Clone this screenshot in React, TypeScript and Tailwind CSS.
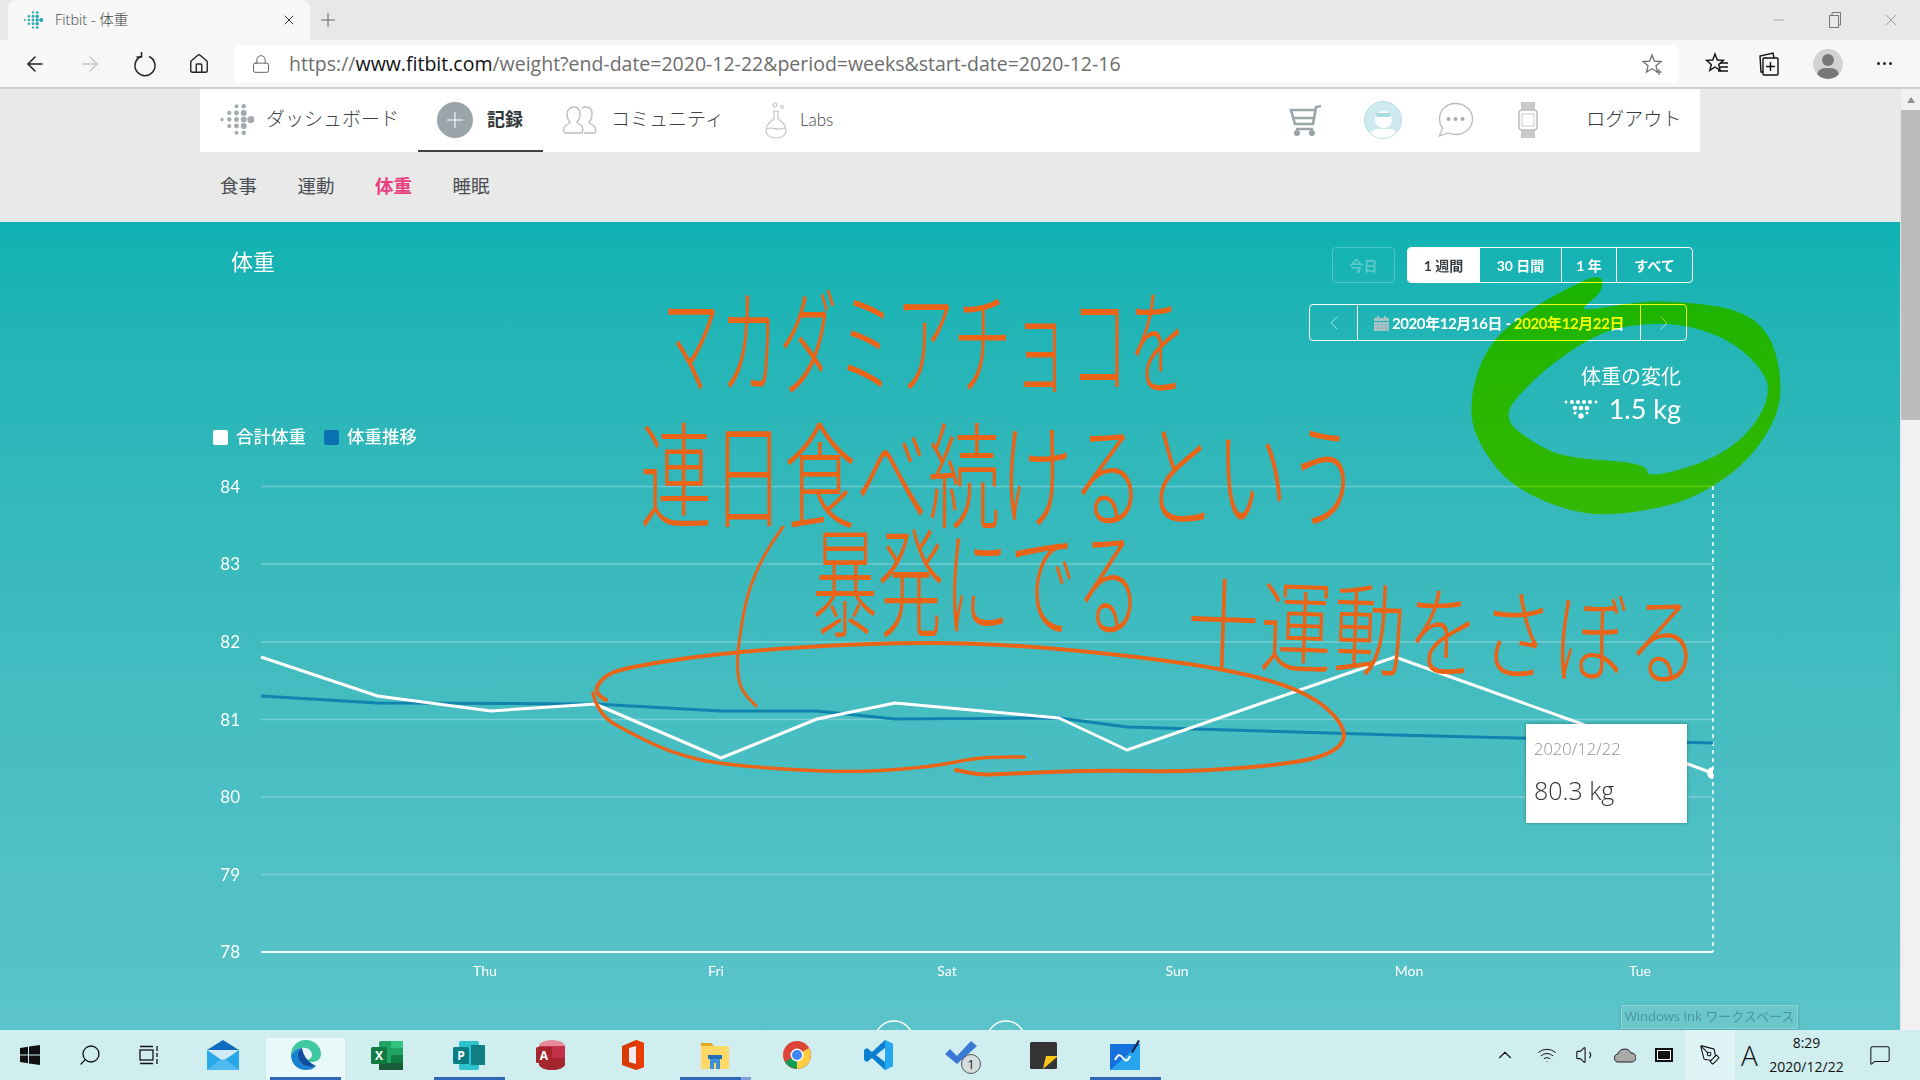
import React from "react";
import { ArrowLeft, ArrowRight, Home, Lock, X, Plus, Minus, ChevronLeft, ChevronRight, ChevronUp, Search, Volume1, Wifi, PenTool, MessageSquare } from "lucide-react";

const smooth = (pts: number[][], close = false) => {
  if (close) {
    const m0 = [(pts[pts.length - 1][0] + pts[0][0]) / 2, (pts[pts.length - 1][1] + pts[0][1]) / 2];
    let d = `M${m0[0]} ${m0[1]}`;
    pts.forEach((p, i) => {
      const n = pts[(i + 1) % pts.length];
      d += ` Q${p[0]} ${p[1]} ${(p[0] + n[0]) / 2} ${(p[1] + n[1]) / 2}`;
    });
    return d + " Z";
  }
  let d = `M${pts[0][0]} ${pts[0][1]}`;
  for (let i = 1; i < pts.length - 1; i++) {
    const p = pts[i], n = pts[i + 1];
    d += ` Q${p[0]} ${p[1]} ${(p[0] + n[0]) / 2} ${(p[1] + n[1]) / 2}`;
  }
  const l = pts[pts.length - 1];
  return d + ` L${l[0]} ${l[1]}`;
};

const FitbitLogo = ({ size, color }: { size: number; color: string }) => {
  const cols: [number, number, number][] = [[3, 0, 1.6], [10, 1, 2.1], [17, 2, 2.4], [24, 3, 2.2], [24, 1, 2.9], [31, 0, 3.5]];
  const dots: React.ReactNode[] = [];
  cols.forEach(([x, n, r], i) => {
    for (let k = -n; k <= n; k++) {
      const rr = Math.abs(k) === n && n > 1 ? r * 0.8 : r;
      dots.push(<circle key={`${i}${k}`} cx={x} cy={17 + k * 6.4} r={rr} fill={color} />);
    }
  });
  return <svg width={size} height={size} viewBox="0 0 34 34">{dots}</svg>;
};

const polyW = "261,657 377.5,696 491,711 595,704 721,758 817,719 895,703 1059,718 1127,750 1395,657 1582,724 1712,773";
const polyB = "261,696 377.5,703 595,704 721,711 817,711 895,719 1059,718 1127,727 1395,735 1713,743";
const ySteps: [string, number][] = [["84", 486.5], ["83", 564], ["82", 642], ["81", 719.5], ["80", 797], ["79", 874.5], ["78", 952]];
const xSteps: [string, number][] = [["Thu", 485], ["Fri", 716], ["Sat", 947], ["Sun", 1177], ["Mon", 1409], ["Tue", 1640]];

const greenOuter = [[1602,272],[1603,293],[1574,313],[1639,301],[1688,302],[1741,310],[1770,333],[1782,377],[1778,417],[1749,460],[1709,490],[1668,507],[1606,516],[1566,510],[1525,493],[1496,470],[1472,430],[1471,397],[1480,363],[1496,337],[1525,313],[1558,293]];
const greenInner = [[1502,418],[1525,387],[1566,353],[1606,330],[1647,323],[1688,325],[1729,340],[1757,363],[1772,390],[1753,430],[1713,460],[1647,479],[1647,463],[1566,458],[1533,443]];

const Segment = ({ children, active, w }: { children: React.ReactNode; active?: boolean; w: string }) => (
  <div className={`${w} h-full flex items-center justify-center text-[14px] font-bold ${active ? "bg-white text-[#3a3f44]" : "text-white border-l border-white"}`}>{children}</div>
);

const TaskItem = ({ children, active, under, under2 }: { children: React.ReactNode; active?: boolean; under?: boolean; under2?: boolean }) => (
  <div className="w-[82px] h-full relative flex items-center justify-center">
    {active && <div className="absolute left-[2px] right-[1px] top-[8px] bottom-0 bg-[#e9f8f8]" />}
    {under && <div className="absolute bottom-0 h-[3px] left-[6px] right-[5px] bg-[#2f66b5]" />}
    {under2 && <div className="absolute bottom-0 h-[3px] left-[67px] w-[10px] bg-[#7f9fd8]" />}
    <div className="relative">{children}</div>
  </div>
);

export default function App() {
  return (
    <div className="w-[1920px] h-[1080px] overflow-hidden flex flex-col font-['Lato','Noto_Sans_CJK_JP',sans-serif] bg-[#e9e9e9]">
      {/* tab strip */}
      <div className="h-[40px] bg-[#e8e8e8] flex items-end pl-[8px]">
        <div className="w-[302px] h-[40px] bg-[#f7f7f7] rounded-t-[8px] flex items-center pl-[15px] pr-[13px] font-['Open_Sans','Noto_Sans_CJK_JP',sans-serif]">
          <FitbitLogo size={20} color="#2aa8ad" />
          <span className="ml-[12px] text-[14.5px] text-[#444] font-light">Fitbit - 体重</span>
          <X className="ml-auto text-[#333]" size={16} strokeWidth={1.5} />
        </div>
        <div className="ml-[7px] h-[40px] flex items-center"><Plus size={22} strokeWidth={1} className="text-[#555]" /></div>
        <div className="ml-auto h-[40px] flex items-center text-[#888]">
          <Minus size={16} strokeWidth={1} />
          <svg className="ml-[40px]" width="16" height="18" viewBox="0 0 16 18" fill="none" stroke="#777"><rect x="2.5" y="4.5" width="9" height="12" /><path d="M5 4V1.500h8.500V14H12" /></svg>
          <X className="ml-[38px] mr-[19px]" size={20} strokeWidth={0.9} />
        </div>
      </div>
      {/* toolbar */}
      <div className="h-[49px] bg-[#f7f7f7] border-b-2 border-[#cfcfcf] flex items-center">
        <ArrowLeft className="ml-[23px] text-[#222]" size={24} strokeWidth={1.5} />
        <ArrowRight className="ml-[31px] text-[#c4c4c4]" size={24} strokeWidth={1.5} />
        <svg className="ml-[31px]" width="24" height="26" viewBox="0 0 24 26" fill="none" stroke="#222" strokeWidth="1.500"><path d="M8 5.500a10 10 0 1 0 8 0" /><path d="M8.500 1v5H3.500" /></svg>
        <Home className="ml-[31px] text-[#222]" size={22} strokeWidth={1.5} />
        <div className="ml-[24px] w-[1445px] h-[38px] bg-white rounded-[5px] flex items-center pl-[17px] font-['Open_Sans',sans-serif]">
          <Lock size={20} strokeWidth={1.2} className="text-[#666]" />
          <div className="ml-[18px] text-[19.5px] text-[#6d6d6d] whitespace-nowrap">
            https://<span className="text-[#111]">www.fitbit.com</span>/weight?end-date=2020-12-22&amp;period=weeks&amp;start-date=2020-12-16
          </div>
          <svg className="ml-auto mr-[15px]" width="22" height="24" viewBox="0 0 22 24" fill="none" stroke="#666" strokeWidth="1.2"><path d="M10 3l2.400 6.200 6.600.4-5.100 4.200 1.700 6.400L10 16.600 4.400 20.200l1.700-6.400L1 9.600l6.600-.4z" /><path d="M17 17v6M14 20h6" /></svg>
        </div>
        <svg className="ml-[26px]" width="24" height="26" viewBox="0 0 24 26" fill="none" stroke="#111" strokeWidth="1.4"><path d="M10 3l2.300 6 6.200.4-4.800 4 1.500 6L10 16l-5.200 3.400 1.500-6-4.800-4 6.200-.4z" /><path d="M15 12h8M15 16h8M13 20h10" /></svg>
        <svg className="ml-[29px]" width="24" height="28" viewBox="0 0 24 28" fill="none" stroke="#111" strokeWidth="1.4"><rect x="5" y="8" width="15" height="17" rx="1" /><path d="M5 22H3L2 6l13-3 1 5M12.500 12v9M8 16.500h9" /></svg>
        <div className="ml-[31px] w-[30px] h-[30px] rounded-full bg-[#d3d3d3] relative overflow-hidden">
          <div className="absolute left-[9px] top-[5px] w-[12px] h-[12px] rounded-full bg-[#777]" />
          <div className="absolute left-[4px] top-[19px] w-[22px] h-[16px] rounded-full bg-[#777]" />
        </div>
        <div className="ml-[34px] flex gap-[3px]">
          <div className="w-[3px] h-[3px] rounded-full bg-[#222]" /><div className="w-[3px] h-[3px] rounded-full bg-[#222]" /><div className="w-[3px] h-[3px] rounded-full bg-[#222]" />
        </div>
      </div>

      {/* page */}
      <div className="h-[941px] flex">
        <div className="w-[1900px] flex flex-col">
          <div className="ml-[200px] w-[1500px] h-[63px] bg-white flex items-center pb-[2px] text-[#3f4448] text-[19px] font-light relative">
            <div className="ml-[19px]"><FitbitLogo size={35} color="#a3abae" /></div>
            <span className="ml-[12px]">ダッシュボード</span>
            <div className="ml-[38px] w-[36px] h-[36px] rounded-full bg-[#9aa5a9] flex items-center justify-center"><Plus size={26} strokeWidth={1} className="text-white" /></div>
            <span className="ml-[14px] text-[18px] font-bold text-[#33383c]">記録</span>
            <svg className="ml-[39px]" width="36" height="32" viewBox="0 0 36 32" fill="none" stroke="#b9bdbf" strokeWidth="1.300"><path d="M12 3c4 0 6 3 6 7 0 3-1 6-3 8 0 2 3 2 5 4 1 2 1 6 0 7H3c-2-1-2-5 0-7s5-2 5-4c-2-2-3-5-3-8 0-4 3-7 7-7z" /><path d="M20 4c1-1 3-1 4-1 4 0 6 3 6 7 0 3-1 6-3 8 0 2 3 2 5 4 2 2 2 6 1 7H22" /></svg>
            <span className="ml-[13px]">コミュニティ</span>
            <svg className="ml-[40px]" width="24" height="38" viewBox="0 0 24 38" fill="none" stroke="#c3c6c8" strokeWidth="1.200"><path d="M9 10h6M10 10v8C6 21 2 24 2 29c0 5 4 8 10 8s10-3 10-8c0-5-4-8-8-11v-8" /><path d="M3 28c5-3 8 2 18-1" /><circle cx="11" cy="4" r="2" /><circle cx="18" cy="6" r="1.500" /></svg>
            <span className="ml-[12px] text-[17px]">Labs</span>
            <svg className="ml-[456px]" width="33" height="32" viewBox="0 0 33 32" fill="none" stroke="#9aa5a9" strokeWidth="2.600"><path d="M32 2l-5 1-3 17H6L2 6h24" /><path d="M5 14h20M7 25h17" /><circle cx="8" cy="29" r="1.800" fill="#9aa5a9" /><circle cx="23" cy="29" r="1.800" fill="#9aa5a9" /></svg>
            <div className="ml-[42px] w-[38px] h-[38px] rounded-full bg-[#cfeaee] border border-[#b8dfe5] relative overflow-hidden">
              <div className="absolute left-[10px] top-[9px] w-[17px] h-[17px] rounded-full bg-white" />
              <div className="absolute left-[11px] top-[11px] w-[15px] h-[4px] rounded-full bg-[#a9dbe2]" />
              <div className="absolute left-[3px] top-[27px] w-[31px] h-[20px] rounded-full bg-white" />
            </div>
            <svg className="ml-[35px]" width="37" height="36" viewBox="0 0 37 36" fill="none" stroke="#b9bdbf" strokeWidth="1.300"><path d="M18.500 1.500C28 1.500 35.500 8.500 35.500 17s-7.500 15.500-17 15.500c-2.500 0-5-.5-7-1.500l-9 3 3-8c-2-2.500-3-5.500-3-9C2.500 8.500 9 1.500 18.500 1.500z" /><circle cx="11.500" cy="17" r="2" fill="#a8adaf" stroke="none" /><circle cx="18.500" cy="17" r="2" fill="#a8adaf" stroke="none" /><circle cx="25.500" cy="17" r="2" fill="#a8adaf" stroke="none" /></svg>
            <svg className="ml-[43px]" width="22" height="36" viewBox="0 0 22 36" fill="none"><rect x="4" y="0" width="14" height="8" fill="#c9c9c9" /><rect x="4" y="28" width="14" height="8" fill="#c9c9c9" /><rect x="2" y="8" width="18" height="20" rx="3" stroke="#bbb" strokeWidth="1.500" /><rect x="5" y="12" width="12" height="12" stroke="#ccc" /></svg>
            <span className="ml-[47px] text-[#33383c]">ログアウト</span>
            <div className="absolute left-[218px] top-[61px] w-[125px] h-[2px] bg-[#3c4146]" />
          </div>
          <div className="ml-[220px] h-[70px] flex items-center gap-[40.5px] text-[18.5px] text-[#4a4f53] pb-[1px]">
            <span>食事</span><span>運動</span><span className="font-bold text-[#e8407f]">体重</span><span>睡眠</span>
          </div>

          {/* teal section */}
          <div className="relative flex-1 overflow-hidden isolate bg-linear-to-b from-[#0eb2b3] to-[#5ac4ca] text-white">
            <div className="w-[1700px] h-[250px] flex justify-between pl-[213px]">
              <div className="flex flex-col justify-between pb-[23px] pt-[26px]">
                <div className="ml-[18px] text-[22px] leading-[28px]">体重</div>
                <div className="flex items-center text-[17.5px] font-medium leading-[24px]">
                  <div className="w-[15px] h-[15px] rounded-[2px] bg-white" />
                  <span className="ml-[8px]">合計体重</span>
                  <div className="ml-[18px] w-[15px] h-[15px] rounded-[2px] bg-[#0a72b0]" />
                  <span className="ml-[8px]">体重推移</span>
                </div>
              </div>
              <div className="flex flex-col items-end pt-[25px] pr-[7px]">
                <div className="flex h-[36px]">
                  <div className="w-[63px] h-[36px] rounded-[4px] border border-white/25 flex items-center justify-center text-[14px] font-bold text-white/30">今日</div>
                  <div className="ml-[12px] flex h-[36px] rounded-[4px] border border-white overflow-hidden">
                    <Segment active w="w-[71px]">1 週間</Segment>
                    <Segment w="w-[82px]">30 日間</Segment>
                    <Segment w="w-[55px]">1 年</Segment>
                    <Segment w="w-[76px]">すべて</Segment>
                  </div>
                </div>
                <div className="mt-[21px] mr-[6px] flex h-[37px] w-[378px] rounded-[4px] border border-white">
                  <div className="w-[47px] flex items-center justify-center"><ChevronLeft size={24} strokeWidth={1} className="text-white/60" /></div>
                  <div className="w-[284px] border-x border-white flex items-center justify-center pt-[2px] text-[15px] font-bold tracking-[-0.4px] whitespace-nowrap">
                    <svg className="mr-[3px]" width="15" height="15" viewBox="0 0 15 15" fill="#a7c4c9"><path d="M3 0h2v2h5V0h2v2h3v3H0V2h3z" /><path d="M0 6h15v9H0z" /><path d="M0 9h15M0 12h15M4 6v9M8 6v9M12 6v9" stroke="#8fb3b8" strokeWidth=".6" /></svg>
                    2020年12月16日 - 2020年12月22日
                  </div>
                  <div className="flex-1 flex items-center justify-center"><ChevronRight size={24} strokeWidth={1} className="text-white/60" /></div>
                </div>
                <div className="mt-[22px] mr-[12px] flex flex-col items-end">
                  <div className="text-[20px] leading-[26px]">体重の変化</div>
                  <div className="mt-[2px] flex items-center">
                    <svg width="34" height="20" viewBox="0 0 34 20" fill="#fff">
                      {[2, 8, 14, 20, 26, 32].map((x) => <circle key={x} cx={x} cy="3" r={x === 2 || x === 32 ? 1.4 : 2} />)}
                      {[11, 17, 23].map((x) => <circle key={x} cx={x} cy="9" r="2.300" />)}
                      <circle cx="17" cy="17" r="2.700" /><circle cx="11" cy="14" r="1.500" /><circle cx="23" cy="14" r="1.500" />
                    </svg>
                    <span className="ml-[11px] text-[27px] leading-[36px]">1.5 kg</span>
                  </div>
                </div>
              </div>
            </div>

            <svg className="block" width="1900" height="560" viewBox="0 472 1900 560" style={{ fontFamily: "Lato, sans-serif" }}>
              {ySteps.map(([l, y]) => (
                <g key={l}>
                  <line x1="261" x2="1713" y1={y} y2={y} stroke="#fff" strokeOpacity={l === "78" ? 0.95 : 0.28} strokeWidth={l === "78" ? 2 : 1.5} />
                  <text x="240" y={y + 6} textAnchor="end" fontSize="17" fill="#fff" fontWeight="400">{l}</text>
                </g>
              ))}
              {xSteps.map(([l, x]) => (
                <text key={l} x={x} y="976" textAnchor="middle" fontSize="14" fill="#fff" fontWeight="400">{l}</text>
              ))}
              <line x1="1713" x2="1713" y1="486" y2="952" stroke="#fff" strokeWidth="1.500" strokeDasharray="4 4" />
              <polyline points={polyB} fill="none" stroke="#0f84ae" strokeWidth="3" strokeLinejoin="round" />
              <polyline points={polyW} fill="none" stroke="#fff" strokeWidth="3" strokeLinejoin="round" />
              <path d="M1713 767a6 6 0 0 0 0 12z" fill="#fff" />
              <circle cx="894" cy="1040" r="19" fill="none" stroke="#fff" strokeWidth="1.500" />
              <circle cx="1006" cy="1040" r="19" fill="none" stroke="#fff" strokeWidth="1.500" />
            </svg>

            {/* chart tooltip */}
            <div className="absolute left-[1526px] top-[502px] w-[161px] h-[99px] bg-white shadow-[0_0_3px_rgba(0,0,0,0.35)] pl-[8px] pt-[12px] font-['Open_Sans',sans-serif] font-light">
              <div className="text-[16.5px] leading-[26px] text-[#8f8f8f]">2020/12/22</div>
              <div className="mt-[13px] text-[25px] leading-[30px] text-[#333]">80.3 kg</div>
            </div>

            {/* ink: strokes */}
            <svg className="absolute left-0 top-0 mix-blend-multiply pointer-events-none" width="1900" height="808" viewBox="0 222 1900 808">
              <path fillRule="evenodd" fill="#f4ff00" d={smooth(greenOuter, true) + " " + smooth(greenInner, true)} />
            </svg>
            <svg className="absolute left-0 top-0 pointer-events-none" width="1900" height="808" viewBox="0 222 1900 808" fill="none" stroke="#ea6418" strokeLinecap="round">
              <path strokeWidth="3" d={smooth([[783,527],[753,567],[737,647],[738,687],[756,706]])} />
              <path strokeWidth="4" d={smooth([[606,700],[593,693],[603,677],[623,668],[720,653],[863,643],[1000,643],[1170,660],[1267,678],[1320,700],[1347,730],[1339,750],[1300,763],[1194,772],[1097,770],[1000,774],[980,775],[956,770]])} />
              <path strokeWidth="3.500" d={smooth([[593,693],[598,715],[634,735],[670,752],[720,765],[848,773],[930,767],[976,758],[1000,757],[1024,757]])} />
            </svg>

            {/* ink: writing */}
            <div className="absolute inset-0 pointer-events-none font-['Noto_Sans_CJK_JP',sans-serif] font-light text-[#ea6418] whitespace-nowrap">
              <div className="absolute left-[662px] top-[85px] text-[58px] leading-[58px] tracking-[0.5px] scale-y-[2]">マカダミアチョコを</div>
              <div className="absolute left-[640px] top-[211px] text-[72px] leading-[72px] scale-y-[1.6]">連日食べ続けるという</div>
              <div className="absolute left-[812px] top-[321px] text-[66px] leading-[66px] scale-y-[1.8]">暴発にでる</div>
              <div className="absolute left-[1187px] top-[369px] text-[72px] leading-[72px] tracking-[1.500px] scale-y-[1.4] rotate-[2deg]">十運動をさぼる</div>
            </div>

            {/* Windows Ink tooltip */}
            <div className="absolute left-[1621px] top-[783px] w-[177px] h-[24px] bg-[#74c9cd]/70 border border-[#8fd3d6] shadow-[0_1px_3px_rgba(0,0,0,0.2)] flex items-center justify-center text-[13px] text-[#4a959b] font-['Open_Sans','Noto_Sans_CJK_JP',sans-serif] whitespace-nowrap">Windows Ink ワークスペース</div>
          </div>
        </div>
        {/* scrollbar */}
        <div className="w-[20px] bg-[#f1f1f1] border-l border-[#e4e4e4] flex flex-col items-center">
          <div className="h-[21px] flex items-center"><div className="w-0 h-0 border-x-[4px] border-x-transparent border-b-[6px] border-b-[#8f8f8f]" /></div>
          <div className="w-[19px] h-[310px] bg-[#bcbcbc]" />
        </div>
      </div>

      {/* taskbar */}
      <div className="h-[50px] bg-[#d0eef0] flex items-center text-[#111] font-['Open_Sans','Noto_Sans_CJK_JP',sans-serif]">
        <div className="w-[60px] flex justify-center">
          <svg width="20" height="20" viewBox="0 0 20 20" fill="#111"><path d="M0 3l8-1.200V9.500H0zM9 1.600L20 0v9.500H9zM0 10.500h8v7.700L0 17zM9 10.500h11V20L9 18.400z" /></svg>
        </div>
        <div className="w-[60px] flex justify-center"><Search size={24} strokeWidth={1.3} className="-scale-x-100" /></div>
        <div className="w-[60px] flex justify-center">
          <svg width="22" height="20" viewBox="0 0 22 20" fill="none" stroke="#111" strokeWidth="1.300"><rect x="1" y="5" width="13" height="10" /><path d="M1 1.500h13M1 18.500h13M18 1v5M18 8v4M18 14v5" /></svg>
        </div>
        <div className="ml-[2px] flex h-full">
          <TaskItem>
            <svg width="32" height="30" viewBox="0 0 32 30"><path d="M0 10L16 0l16 10v20H0z" fill="#0f6cbd" /><path d="M0 10h32v20H0z" fill="#28a8ea" /><path d="M0 10h32L16 21z" fill="#cfe9f7" /><path d="M0 30l14-11 2 1 2-1 14 11z" fill="#50b9ef" /></svg>
          </TaskItem>
          <TaskItem active under>
            <svg width="31" height="32" viewBox="0 0 31 32"><path d="M1 16C1 7 8 1 16 1c9 0 15 7 15 14 0 5-4 8-9 8-3 0-6-1-6-2 4 0 6-3 6-5 0-5-5-8-10-7-5 0-8 3-11 7z" fill="#3fc9a0" /><path d="M1 16c3-4 6-7 11-7-4 2-5 6-4 10 2 7 10 11 18 8-3 3-6 4-10 4C8 31 1 25 1 16z" fill="#1682d4" /><path d="M8 19c-1-4 0-8 4-10 1 4 2 12 14 18-8 3-16-1-18-8z" fill="#0f4fa0" /></svg>
          </TaskItem>
          <TaskItem>
            <svg width="32" height="29" viewBox="0 0 32 29"><rect x="8" y="0" width="24" height="29" rx="2" fill="#21a366" /><rect x="20" y="0" width="12" height="7" fill="#33c481" /><rect x="20" y="14" width="12" height="8" fill="#107c41" /><rect x="8" y="22" width="24" height="7" fill="#185c37" /><rect x="0" y="6" width="16" height="17" rx="1.500" fill="#107c41" /><text x="8" y="19" textAnchor="middle" fontSize="12" fontWeight="700" fill="#fff">X</text></svg>
          </TaskItem>
          <TaskItem under>
            <svg width="32" height="29" viewBox="0 0 32 29"><rect x="6" y="0" width="20" height="29" rx="2" fill="#2cc3cf" /><rect x="18" y="4" width="14" height="20" fill="#107f86" /><rect x="0" y="6" width="16" height="17" rx="1.500" fill="#0b7c84" /><text x="8" y="19" textAnchor="middle" fontSize="12" fontWeight="700" fill="#fff">P</text></svg>
          </TaskItem>
          <TaskItem>
            <svg width="30" height="30" viewBox="0 0 30 30"><ellipse cx="16" cy="6" rx="13" ry="6" fill="#e58a97" /><path d="M3 6h26v18c0 3-6 6-13 6S3 27 3 24z" fill="#c4314b" /><path d="M3 18h26v6c0 3-6 6-13 6S3 27 3 24z" fill="#a4262c" /><rect x="0" y="7" width="16" height="16" rx="1.500" fill="#a4262c" /><text x="8" y="19.500" textAnchor="middle" fontSize="12" fontWeight="700" fill="#fff">A</text></svg>
          </TaskItem>
          <TaskItem>
            <svg width="24" height="30" viewBox="0 0 24 30"><path d="M1 6l14-6 8 3v24l-8 3-14-5z" fill="#d83b01" /><path d="M8 8l7-2v18l-7-2z" fill="#f6e6ee" /><path d="M15 0l8 3v24l-8 3z" fill="#eb3c00" /></svg>
          </TaskItem>
          <TaskItem under under2>
            <svg width="28" height="28" viewBox="0 0 28 28"><path d="M0 2h10l3 3h-13z" fill="#e2a91c" /><rect x="0" y="5" width="28" height="23" fill="#ffd865" /><path d="M9 28V17h10v11h-4v-6h-2v6z" fill="#3a8fd6" /><rect x="7" y="14" width="14" height="4" fill="#1f6fb8" /></svg>
          </TaskItem>
          <TaskItem>
            <svg width="28" height="28" viewBox="0 0 28 28"><circle cx="14" cy="14" r="14" fill="#db4437" /><path d="M2 21L14 14l12 7a14 14 0 0 1-24 0z" fill="#0f9d58" /><path d="M14 14l12-7a14 14 0 0 1-12 21z" fill="#ffcd40" /><circle cx="14" cy="14" r="6.500" fill="#fff" /><circle cx="14" cy="14" r="5" fill="#4285f4" /></svg>
          </TaskItem>
          <TaskItem>
            <svg width="30" height="30" viewBox="0 0 30 30"><path d="M21 0l8 4v22l-8 4L8 18l-5 4-3-2V10l3-2 5 4z" fill="#0a7fd0" /><path d="M21 0l8 4v22l-8 4z" fill="#23a8f2" /><path d="M21 8v14l-9-7z" fill="#d0eef0" /></svg>
          </TaskItem>
          <TaskItem>
            <div className="relative w-[36px] h-[30px]">
              <svg width="36" height="26" viewBox="0 0 36 26"><path d="M2 14l5-5 7 7L28 1l6 5-20 18z" fill="#3a78d8" /></svg>
              <div className="absolute left-[18px] top-[14px] w-[20px] h-[20px] rounded-full bg-[#d5dcdd] border border-[#555] flex items-center justify-center text-[13px] leading-none text-[#222]">1</div>
            </div>
          </TaskItem>
          <TaskItem>
            <svg width="27" height="27" viewBox="0 0 27 27"><rect width="27" height="27" rx="1.500" fill="#333" /><path d="M13 27l3-13h11v1z" fill="#ffc61a" /></svg>
          </TaskItem>
          <TaskItem under>
            <svg width="30" height="30" viewBox="0 0 30 30"><rect y="4" width="30" height="26" fill="#1470dc" /><path d="M30 4v26H0z" fill="#28a4ee" /><path d="M5 20c3-6 5-6 8-2s5 3 7-2" stroke="#fff" strokeWidth="2" fill="none" /><path d="M21 12l7-12 2 1-7 12z" fill="#17264f" /></svg>
          </TaskItem>
        </div>
        <div className="ml-auto flex items-center h-full">
          <ChevronUp size={22} strokeWidth={1.2} />
          <Wifi className="ml-[21px]" size={20} strokeWidth={1.2} />
          <Volume1 className="ml-[18px]" size={22} strokeWidth={1.2} />
          <svg className="ml-[17px]" width="22" height="18" viewBox="0 0 22 18"><path d="M5 16a4 4 0 0 1-1-8 7 7 0 0 1 13-1 4.500 4.500 0 0 1 1 9z" fill="#aaa" stroke="#222" /></svg>
          <div className="ml-[19px] w-[18px] h-[14px] border-2 border-[#111] bg-[#111] shadow-[inset_0_0_0_1px_#fff]" />
          <div className="ml-[12px] w-[50px] h-full bg-[#dff4f5] flex items-center justify-center"><PenTool size={22} strokeWidth={1.2} /></div>
          <div className="ml-[5px] text-[28px] font-light w-[19px] text-center">A</div>
          <div className="ml-[2px] w-[91px] flex flex-col items-center text-[14px] leading-[24px]">
            <span>8:29</span><span>2020/12/22</span>
          </div>
          <MessageSquare className="ml-[17px] mr-[29px]" size={22} strokeWidth={1.1} />
        </div>
      </div>
    </div>
  );
}
